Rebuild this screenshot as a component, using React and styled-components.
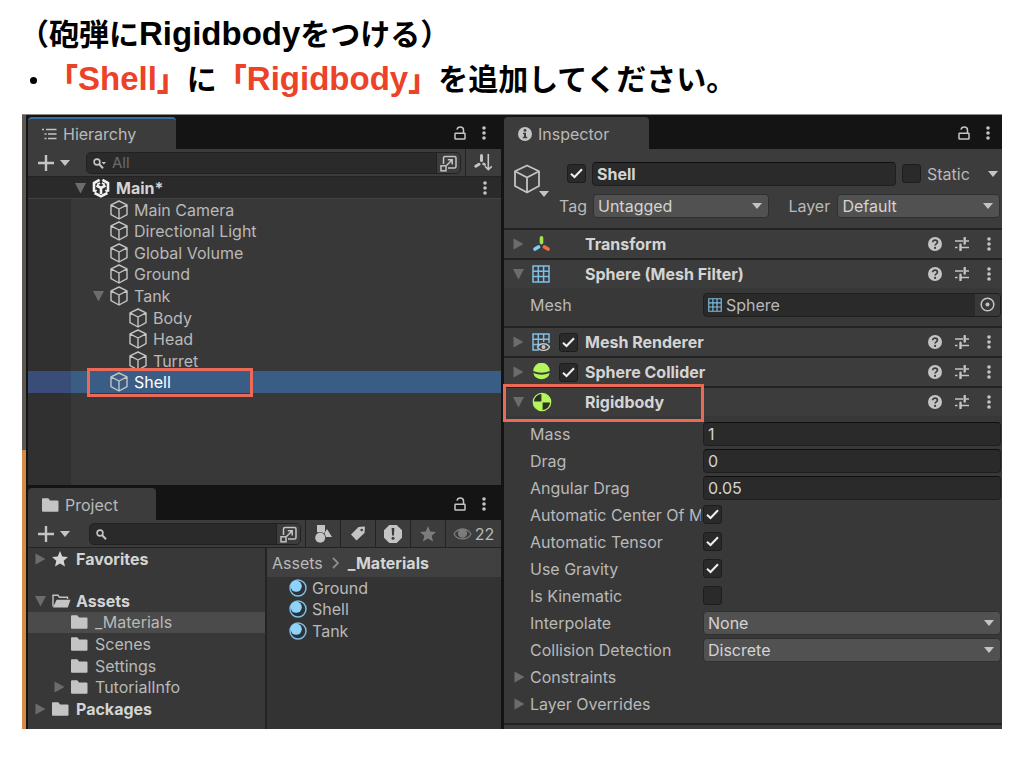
import React from "react";
import styled, { createGlobalStyle, css } from "styled-components";

const GlobalStyle = createGlobalStyle`
  *, *::before, *::after { box-sizing: border-box; }
  body { margin: 0; background: #fff; }
  button, input, select { font: inherit; color: inherit; margin: 0; }
  svg { display: block; flex: none; }
  ul { list-style: none; margin: 0; padding: 0; }
`;

const c = {
  black: "#141414",
  panel: "#3c3c3c",
  body: "#383838",
  gutter: "#303030",
  field: "#2a2a2a",
  line: "#232323",
  text: "#b9b9b9",
  bright: "#d4d4d4",
  icon: "#c4c4c4",
  arrow: "#6c6c6c",
  blue: "#8fd3fb",
  lime: "#b5f55c",
  mark: "#ea6a57",
};

/* ---------- slide ---------- */

const Slide = styled.main`
  padding: 13px 22px 38px;
`;

const Heading = styled.h1`
  margin: 0 0 0 -3px;
  font: 700 30px/44px "Liberation Sans", "Noto Sans CJK JP", sans-serif;
  color: #000;
  white-space: nowrap;
`;

const Bullets = styled.ul`
  font: 700 30px/46px "Liberation Sans", "Noto Sans CJK JP", sans-serif;
  color: #000;
  white-space: nowrap;
`;

const Bullet = styled.li`
  display: flex;
  align-items: center;
  &::before {
    content: "";
    width: 7px;
    height: 7px;
    margin: 0 11px 0 8px;
    border-radius: 50%;
    background: #000;
  }
`;

const Latin = styled.span`
  font-size: 33px;
  line-height: 1;
`;

const Red = styled.strong`
  color: #ec4228;
`;

/* ---------- editor frame ---------- */

const Editor = styled.div`
  display: grid;
  grid-template-columns: 6px minmax(0, 473fr) 3px minmax(0, 498fr);
  margin-top: 11px;
  border-top: 1px solid #8a8a8a;
  background: ${c.black};
  color: ${c.text};
  font: 400 16px/20px Inter, sans-serif;
`;

const Strip = styled.div`
  display: flex;
  flex-direction: column;
  margin-right: 2px;
`;

const StripPart = styled.div`
  flex: ${(p) => p.$grow};
  background: ${(p) => p.$color};
`;

const Column = styled.div`
  grid-column: ${(p) => p.$col};
  display: flex;
  flex-direction: column;
  min-width: 0;
`;

const Panel = styled.section`
  display: flex;
  flex-direction: column;
  flex: ${(p) => (p.$grow ? 1 : "none")};
`;

const TabBar = styled.header`
  display: flex;
  align-items: flex-end;
  justify-content: space-between;
  height: ${(p) => p.$h}px;
  background: ${c.black};
`;

const Tab = styled.button`
  display: flex;
  align-items: center;
  gap: 6px;
  height: 32px;
  width: ${(p) => p.$w}px;
  padding: 0 0 0 14px;
  border: 0;
  border-top: 2px solid ${(p) => (p.$active ? "#3b6c9f" : c.panel)};
  border-radius: 4px 4px 0 0;
  background: ${c.panel};
  text-align: left;
  svg { color: ${c.icon}; }
`;

const IconButton = styled.button`
  display: grid;
  place-items: center;
  flex: none;
  width: ${(p) => p.$w || 20}px;
  height: 22px;
  padding: 0;
  border: 0;
  background: none;
  color: ${c.icon};
`;

const TabTools = styled.div`
  display: flex;
  align-items: center;
  gap: 2px;
  height: 32px;
  padding-right: ${(p) => p.$pad}px;
`;

const Toolbar = styled.div`
  display: flex;
  height: 28px;
  background: ${c.panel};
  border-bottom: 1px solid ${c.line};
`;

const AddButton = styled.button`
  display: flex;
  align-items: center;
  gap: 6px;
  width: ${(p) => p.$w}px;
  padding: 0 0 0 10px;
  border: 0;
  background: none;
  color: ${c.icon};
`;

const Search = styled.label`
  display: flex;
  flex: 1;
  align-items: center;
  gap: 6px;
  min-width: 0;
  margin: 3px 4px 2px 0;
  padding-left: 6px;
  overflow: hidden;
  border: 1px solid #212121;
  border-radius: 5px;
  background: ${c.field};
  color: ${c.icon};
  input {
    flex: 1;
    min-width: 0;
    padding: 0;
    border: 0;
    outline: 0;
    background: none;
    font-size: 15px;
  }
  input::placeholder { color: #6b6b6b; opacity: 1; }
  button {
    height: 100%;
    background: ${c.panel};
    border-left: 1px solid #212121;
  }
`;

const ToolButton = styled.button`
  display: flex;
  align-items: center;
  justify-content: center;
  gap: 3px;
  flex: none;
  width: ${(p) => p.$w || 35}px;
  padding: 0;
  border: 0;
  border-left: 1px solid ${c.line};
  background: ${c.panel};
  color: ${(p) => (p.$dim ? "#7c7c7c" : c.icon)};
  span { color: ${c.text}; }
`;

/* ---------- trees ---------- */

const SceneRow = styled.div`
  display: flex;
  align-items: center;
  gap: 6px;
  height: 22px;
  padding: 0 6px 0 47px;
  background: #2a2a2a;
  border-bottom: 1px solid #414141;
  color: ${c.bright};
  font-weight: 700;
  span { flex: 1; }
`;

const HierarchyBody = styled.div`
  flex: 1;
  padding-bottom: 92px;
  background: linear-gradient(to right, ${c.gutter} 43px, ${c.body} 43px);
`;

const Rows = styled.ul`
  display: grid;
  grid-auto-rows: 1fr;
  height: ${(p) => p.$h}px;
`;

const Row = styled.li`
  position: relative;
  display: grid;
  grid-template-columns: 11px 18px 1fr;
  align-items: center;
  column-gap: 6px;
  padding-left: ${(p) => p.$indent}px;
  white-space: nowrap;
  ${(p) => p.$strong && css`
    color: ${c.bright};
    font-weight: 700;
  `}
  ${(p) => p.$hover && css`background: #4b4b4b;`}
  ${(p) => p.$selected && css`
    background: linear-gradient(to right, #3a4d78 43px, #3a5d85 43px);
    color: #fff;
  `}
`;

const Mark = styled.span`
  position: absolute;
  pointer-events: none;
  border: 3px solid ${c.mark};
  inset: ${(p) => p.$inset};
  width: ${(p) => p.$w}px;
`;

const ProjectBody = styled.div`
  flex: 1;
  display: grid;
  grid-template-columns: minmax(0, 237fr) minmax(0, 236fr);
  background: ${c.body};
`;

const Folders = styled.div`
  padding-bottom: 9px;
`;

const Favorites = styled(Rows)`
  margin-bottom: 20px;
`;

const Files = styled.div`
  border-left: 2px solid ${c.line};
  background: #333;
`;

const Crumbs = styled.nav`
  display: flex;
  align-items: center;
  gap: 9px;
  height: 29px;
  padding-left: 5px;
  background: #404040;
  a { color: inherit; text-decoration: none; }
  a:last-child { color: ${c.bright}; font-weight: 700; }
`;

const FileRow = styled.li`
  display: flex;
  align-items: center;
  gap: 5px;
  padding-left: 22px;
`;

/* ---------- inspector ---------- */

const Inspector = styled(Panel)`
  background: ${c.body};
`;

const ObjectHeader = styled.div`
  display: flex;
  gap: 10px;
  padding: 12px 2px 10px 9px;
  background: ${c.panel};
`;

const ObjectIcon = styled.button`
  display: flex;
  align-items: flex-end;
  flex: none;
  width: 36px;
  height: 36px;
  padding: 0;
  border: 0;
  background: none;
  color: ${c.icon};
  svg:first-child { margin-bottom: 3px; }
  svg:last-child { margin-left: -2px; }
`;

const ObjectFields = styled.div`
  flex: 1;
  display: flex;
  flex-direction: column;
  gap: 7px;
  min-width: 0;
`;

const Line = styled.div`
  display: flex;
  align-items: center;
  height: 25px;
`;

const NameLine = styled(Line)`
  padding-left: 8px;
  gap: 6px;
`;

const TextInput = styled.input`
  flex: 1;
  min-width: 0;
  width: 100%;
  height: 24px;
  padding: 0 4px;
  border: 1px solid #1f1f1f;
  border-top-color: #0f0f0f;
  border-radius: 4px;
  outline: 0;
  background: ${c.field};
  color: ${c.bright};
  font-weight: ${(p) => (p.$bold ? 700 : 400)};
`;

const StaticLabel = styled.label`
  width: 53px;
`;

const TagLabel = styled.label`
  flex: none;
  width: ${(p) => p.$w}px;
`;

const SelectBox = styled.span`
  display: grid;
  align-items: center;
  flex: ${(p) => p.$grow || 1};
  min-width: 0;
  height: 24px;
  border: 1px solid #303030;
  border-radius: 4px;
  background: #515151;
  color: ${c.icon};
  select {
    grid-area: 1 / 1;
    width: 100%;
    padding: 0 20px 0 4px;
    appearance: none;
    border: 0;
    outline: 0;
    background: none;
    color: ${c.bright};
  }
  svg {
    grid-area: 1 / 1;
    justify-self: end;
    margin-right: 6px;
    pointer-events: none;
  }
`;

const CheckBox = styled.span`
  display: grid;
  place-items: center;
  flex: none;
  width: 19px;
  height: 19px;
  color: #f0f0f0;
  input {
    grid-area: 1 / 1;
    width: 19px;
    height: 19px;
    appearance: none;
    border: 1px solid #1d1d1d;
    border-radius: 3px;
    background: ${c.field};
  }
  svg { grid-area: 1 / 1; pointer-events: none; visibility: hidden; }
  input:checked + svg { visibility: visible; }
`;

const ComponentBar = styled.div`
  position: relative;
  display: grid;
  grid-template-columns: 12px 20px 19px 1fr auto;
  align-items: center;
  column-gap: 7px;
  height: 30px;
  padding: 0 3px 0 9px;
  border-top: 2px solid ${c.line};
  background: ${c.panel};
  h2 {
    grid-column: 4;
    margin: 0;
    font: inherit;
    font-weight: 700;
    color: ${c.bright};
  }
`;

const BarTools = styled.div`
  grid-column: 5;
  display: flex;
  gap: 7px;
`;

const Fields = styled.div`
  padding: ${(p) => p.$pad};
`;

const Field = styled.div`
  display: grid;
  grid-template-columns: minmax(0, 171fr) minmax(0, 298fr);
  column-gap: 2px;
  align-items: center;
  height: 27px;
  padding: 0 1px 0 26px;
  label {
    overflow: hidden;
    white-space: nowrap;
  }
`;

const ObjectField = styled.span`
  display: flex;
  align-items: center;
  gap: 4px;
  height: 24px;
  padding-left: 4px;
  overflow: hidden;
  border: 1px solid #1f1f1f;
  border-radius: 4px;
  background: ${c.field};
  input {
    flex: 1;
    min-width: 0;
    padding: 0;
    border: 0;
    outline: 0;
    background: none;
  }
  button { width: 25px; background: ${c.body}; }
`;

const Foldout = styled.button`
  display: flex;
  align-items: center;
  gap: 5px;
  height: 27px;
  padding: 0 0 0 10px;
  border: 0;
  background: none;
`;

const PanelFoot = styled.div`
  flex: 1;
  min-height: 5px;
  border-top: 2px solid ${c.line};
  background: ${c.panel};
`;

/* ---------- icons ---------- */

const Right = () => (
  <svg width="11" height="12" viewBox="0 0 11 12" fill={c.arrow}><path d="M0.5 0.500 10.500 6 0.500 11.500z" /></svg>
);
const Down = () => (
  <svg width="11" height="12" viewBox="0 0 11 12" fill={c.arrow}><path d="M0 1h11L5.500 11.500z" /></svg>
);
const Caret = () => (
  <svg width="10" height="6" viewBox="0 0 10 6" fill="currentColor"><path d="M0 0h10L5 6z" /></svg>
);
const Kebab = () => (
  <svg width="4" height="14" viewBox="0 0 4 14" fill="currentColor">
    <circle cx="2" cy="2" r="1.800" /><circle cx="2" cy="7" r="1.800" /><circle cx="2" cy="12" r="1.800" />
  </svg>
);
const Lock = () => (
  <svg width="12" height="14" viewBox="0 0 12 14" fill="none" stroke="currentColor" strokeWidth="1.500">
    <rect x="1" y="7.200" width="10" height="5.800" rx="0.500" />
    <path d="M3 3.600C3.400 1.700 4.700 1 6.200 1 8.200 1 9.500 2.200 9.500 4v3" />
  </svg>
);
const Plus = () => (
  <svg width="16" height="16" viewBox="0 0 16 16" stroke="currentColor" strokeWidth="2.400"><path d="M8 0v16M0 8h16" /></svg>
);
const Magnifier = ({ menu }) => (
  <svg width="13" height="11" viewBox="0 0 13 11" fill="none" stroke="currentColor" strokeWidth="1.600">
    <circle cx="4" cy="4" r="2.900" /><path d="M6 6l4 4.200" strokeWidth="2" />
    {menu && <path d="M8.500 4h4.500L10.800 6.500z" fill="currentColor" stroke="none" />}
  </svg>
);
const Popout = () => (
  <svg width="17" height="17" viewBox="0 0 17 17" fill="none" stroke="currentColor" strokeWidth="1.500">
    <path d="M3.500 9V3a1.500 1.500 0 0 1 1.500-1.500h9.500A1.500 1.500 0 0 1 16 3v8.500a1.500 1.500 0 0 1-1.500 1.500H8" />
    <rect x="1" y="10.800" width="5" height="5" /><path d="M6.500 10.500 12 5M7.800 4.800h4.400v4.600" />
  </svg>
);
const SortIcon = () => (
  <svg width="19" height="17" viewBox="0 0 19 17" fill="none" stroke="currentColor">
    <path d="M7.500 1.500v5" strokeWidth="3" strokeLinecap="round" />
    <path d="M5 10.300 1.800 12.200" strokeWidth="3" strokeLinecap="round" />
    <path d="M9.500 9.800l1.200.700" strokeWidth="2.600" strokeLinecap="round" />
    <path d="M14.300 0v15.500M11 12.300l3.300 3.300 3.500-3.300" strokeWidth="1.600" />
  </svg>
);
const Cube = ({ large }) => (
  <svg width={large ? 28 : 18} height={large ? 30 : 20} viewBox="0 0 18 20" fill="none" stroke="#c4c4c4" strokeWidth={large ? 1.200 : 1.400} strokeLinejoin="round">
    <path d="M9 1 17 4.800V14.700L9 19 1 14.700V4.800zM1 4.800 9 9l8-4.200M9 9v10" />
  </svg>
);
const UnityMark = () => (
  <svg width="18" height="20" viewBox="0 0 18 20" fill="none" stroke="#f2f2f2" strokeWidth="2.600">
    <path d="M7.600 1.900 2 5v8.700M16 13.700V5L10.400 1.900M2.600 15 9 18.400l6.400-3.400" />
    <path d="M4.500 7.500 9 10l4.500-2.500M9 10v6" />
    <path d="M5.200 6.600 8 5M12.800 6.600 10 5M2 13.800 4.800 12.200M16 13.800 13.200 12.200" strokeWidth="1.800" />
  </svg>
);
const ListIcon = () => (
  <svg width="15" height="12" viewBox="0 0 15 12" fill="none" stroke="currentColor" strokeWidth="1.700">
    <path d="M0 1.500h2M4 1.500H14.500M2.500 6h2M6 6H14.500M2.500 10.500h2M6 10.500H14.500" />
  </svg>
);
const Folder = () => (
  <svg width="17" height="14" viewBox="0 0 17 14" fill="#c4c4c4">
    <path d="M0 1.200A1 1 0 0 1 1 .2h5.300l1.700 2.300h7.500a1 1 0 0 1 1 1v9.300a1 1 0 0 1-1 1H1a1 1 0 0 1-1-1z" />
  </svg>
);
const FolderOpen = () => (
  <svg width="19" height="14" viewBox="0 0 19 14" fill="#c4c4c4">
    <path d="M1 12.500V1.300h5l1.500 2h8V5" fill="none" stroke="#c4c4c4" strokeWidth="1.400" />
    <path d="M4.600 5.800H18.500L15.800 13.600H1z" />
  </svg>
);
const Star = ({ size = 16 }) => (
  <svg width={size} height={size} viewBox="0 0 16 16" fill="currentColor">
    <path d="M8 0l2.300 5.400 5.700.500-4.300 3.900 1.300 5.700L8 12.500l-5 3 1.300-5.700L0 5.900l5.700-.5z" />
  </svg>
);
const Shapes = () => (
  <svg width="17" height="18" viewBox="0 0 17 18" fill="currentColor">
    <path d="M2 0h8v6.500L8.500 8.500 7 7.300H2zM12 4l5 8h-6L9.500 8z" /><circle cx="5.200" cy="12.800" r="5" />
  </svg>
);
const TagIcon = () => (
  <svg width="14" height="15" viewBox="0 0 14 15">
    <path d="M7.500 1 13 0.500a.8.8 0 0 1 .9.900L13.500 7 5.500 14.600 0 8.400z" fill="currentColor" />
    <circle cx="10.700" cy="4" r="1.300" fill={c.panel} />
  </svg>
);
const Alert = () => (
  <svg width="18" height="18" viewBox="0 0 18 18">
    <path d="M5.300 0h7.400L18 5.300v7.400L12.700 18H5.300L0 12.700V5.300z" fill="currentColor" />
    <path d="M7.600 3h2.800l-.5 7.500H8.100z" fill={c.panel} /><circle cx="9" cy="13.300" r="1.500" fill={c.panel} />
  </svg>
);
const Eye = () => (
  <svg width="19" height="12" viewBox="0 0 19 12" fill="none" stroke="currentColor" strokeWidth="1.200">
    <path d="M1 6C4.500 -.6 14.500 -.6 18 6 14.500 12.600 4.500 12.600 1 6z" /><circle cx="9.500" cy="5.200" r="4" fill="currentColor" />
  </svg>
);
const Material = () => (
  <svg width="18" height="18" viewBox="0 0 18 18">
    <circle cx="9" cy="9" r="8" fill="#2b3238" stroke="#7fc0e6" strokeWidth="1.500" />
    <circle cx="7.200" cy="7.200" r="5.600" fill={c.blue} />
  </svg>
);
const Info = () => (
  <svg width="14" height="14" viewBox="0 0 14 14">
    <circle cx="7" cy="7" r="7" fill="currentColor" />
    <circle cx="7" cy="3.400" r="1.400" fill={c.panel} />
    <path d="M5 5.800h3v4h1.200v1.400H4.800V9.800H6V7.200H5z" fill={c.panel} />
  </svg>
);
const Help = () => (
  <svg width="14" height="14" viewBox="0 0 14 14">
    <circle cx="7" cy="7" r="7" fill="currentColor" />
    <path d="M4.700 5.200C4.700 2.500 9.400 2.500 9.400 5.200 9.400 6.900 7.100 6.800 7.100 8.600" fill="none" stroke={c.panel} strokeWidth="1.700" />
    <circle cx="7.100" cy="10.900" r="1.100" fill={c.panel} />
  </svg>
);
const Sliders = () => (
  <svg width="14" height="14" viewBox="0 0 14 14" fill="none" stroke="currentColor">
    <path d="M0 4h8M11 4h3M0 10.500h2.500M6 10.500h8" strokeWidth="1.400" />
    <path d="M9.700 1v5.500M5.500 7.700v5.500" strokeWidth="2.400" strokeLinecap="round" />
  </svg>
);
const Target = () => (
  <svg width="15" height="15" viewBox="0 0 15 15"><circle cx="7.500" cy="7.500" r="6.300" fill="none" stroke="currentColor" strokeWidth="1.500" /><circle cx="7.500" cy="7.500" r="2" fill="currentColor" /></svg>
);
const Tick = () => (
  <svg width="13" height="11" viewBox="0 0 13 11" fill="none" stroke="currentColor" strokeWidth="2"><path d="M1 5.800 4.500 9 12 1.200" /></svg>
);
const Chevron = () => (
  <svg width="7" height="12" viewBox="0 0 7 12" fill="none" stroke="#8c8c8c" strokeWidth="1.800"><path d="M1 1l5 5-5 5" /></svg>
);
const Axes = () => (
  <svg width="18" height="18" viewBox="0 0 18 18" fill="none" strokeWidth="3.600" strokeLinecap="round">
    <path d="M9.500 2.800v4.800" stroke="#a4e34a" /><path d="M6.500 12 3 14" stroke="#86cdf5" /><path d="M12.500 12 16 14" stroke="#ee7040" />
  </svg>
);
const Grid = ({ size = 18, dots }) => (
  <svg width={size} height={size} viewBox="0 0 18 18" fill="none" stroke="#7fbfe6" strokeWidth="1.500">
    {dots ? (
      <>
        <path d="M7 17H1V1h16v9M1 6.300h16M1 11.600h8M6.300 1v15M11.600 1v8" />
        <path d="M5.500 14C8 9.500 15 9.500 17.500 14 15 18.500 8 18.500 5.500 14z" fill={c.panel} stroke="#c4c4c4" />
        <circle cx="11.500" cy="14" r="2" fill="#c4c4c4" stroke="none" />
      </>
    ) : (
      <path d="M1 1h16v16H1zM1 6.300h16M1 11.600h16M6.300 1v16M11.600 1v16" />
    )}
  </svg>
);
const SphereIcon = () => (
  <svg width="18" height="18" viewBox="0 0 18 18" fill={c.lime}>
    <path d="M1.200 8a8.300 8.300 0 0 1 16.600 0Q9.500 11.500 1.200 8z" /><path d="M1.300 10a8.300 7.500 0 0 0 16.400 0Q9.500 13.400 1.300 10z" />
  </svg>
);
const RigidIcon = () => (
  <svg width="20" height="20" viewBox="0 0 20 20">
    <circle cx="10" cy="10" r="8.700" fill="#2b2f25" stroke={c.lime} strokeWidth="1.300" />
    <path d="M10 10V18.700A8.700 8.700 0 0 0 18.700 10zM10 10V1.300A8.700 8.700 0 0 0 1.300 10z" fill={c.lime} transform="matrix(1 0 0 -1 0 20)" />
    <path d="M10 1v18M1 10h18" stroke={c.lime} strokeWidth="1.200" />
  </svg>
);

/* ---------- parts ---------- */

const PanelTabs = ({ icon, name, width, active, pad = 7, height = 34 }) => (
  <TabBar $h={height}>
    <Tab type="button" $w={width} $active={active}>{icon}<span>{name}</span></Tab>
    <TabTools $pad={pad}>
      <IconButton type="button" $w={24} aria-label={`Lock ${name}`}><Lock /></IconButton>
      <IconButton type="button" aria-label={`${name} menu`}><Kebab /></IconButton>
    </TabTools>
  </TabBar>
);

const Check = ({ id, on, label }) => (
  <CheckBox>
    <input type="checkbox" id={id} aria-label={label} defaultChecked={on} />
    <Tick />
  </CheckBox>
);

const Select = ({ id, value, grow }) => (
  <SelectBox $grow={grow}>
    <select id={id} defaultValue={value}><option>{value}</option></select>
    <Caret />
  </SelectBox>
);

const Component = ({ name, icon, open, check, children }) => (
  <ComponentBar>
    {open ? <Down /> : <Right />}
    {icon}
    {check && <Check on label={`${name} enabled`} />}
    <h2>{name}</h2>
    <BarTools>
      <IconButton type="button" aria-label="Help"><Help /></IconButton>
      <IconButton type="button" aria-label="Presets"><Sliders /></IconButton>
      <IconButton type="button" aria-label="More"><Kebab /></IconButton>
    </BarTools>
    {children}
  </ComponentBar>
);

const hierarchy = [
  ["Main Camera", 65],
  ["Directional Light", 65],
  ["Global Volume", 65],
  ["Ground", 65],
  ["Tank", 65, true],
  ["Body", 84],
  ["Head", 84],
  ["Turret", 84],
  ["Shell", 65],
];

const folders = [
  { name: "Assets", indent: 7, arrow: <Down />, icon: <FolderOpen />, strong: true },
  { name: "_Materials", indent: 26, hover: true },
  { name: "Scenes", indent: 26 },
  { name: "Settings", indent: 26 },
  { name: "TutorialInfo", indent: 26, arrow: <Right /> },
  { name: "Packages", indent: 7, arrow: <Right />, strong: true },
];

const numbers = [["Mass", "1"], ["Drag", "0"], ["Angular Drag", "0.05"]];
const toggles = [["Automatic Center Of Mass", true], ["Automatic Tensor", true], ["Use Gravity", true], ["Is Kinematic", false]];
const choices = [["Interpolate", "None"], ["Collision Detection", "Discrete"]];

const idOf = (name) => name.toLowerCase().replace(/\s+/g, "-");

export default function App() {
  return (
    <Slide>
      <GlobalStyle />
      <Heading>（砲弾に<Latin>Rigidbody</Latin>をつける）</Heading>
      <Bullets>
        <Bullet>
          <span>
            <Red>「<Latin>Shell</Latin>」</Red>に<Red>「<Latin>Rigidbody</Latin>」</Red>を追加してください。
          </span>
        </Bullet>
      </Bullets>

      <Editor>
        <Strip>
          <StripPart $grow={335} $color="#5b5850" />
          <StripPart $grow={279} $color="#d58a45" />
        </Strip>

        <Column $col={2}>
          <Panel>
            <PanelTabs icon={<ListIcon />} name="Hierarchy" width={148} active />
            <Toolbar>
              <AddButton type="button" $w={58} aria-label="Create object"><Plus /><Caret /></AddButton>
              <Search>
                <Magnifier menu />
                <input type="text" placeholder="All" aria-label="Search hierarchy" />
                <IconButton type="button" $w={24} aria-label="Open search"><Popout /></IconButton>
              </Search>
              <ToolButton type="button" $w={36} aria-label="Sort"><SortIcon /></ToolButton>
            </Toolbar>
            <SceneRow>
              <Down /><UnityMark /><span>Main*</span>
              <IconButton type="button" aria-label="Scene menu"><Kebab /></IconButton>
            </SceneRow>
            <HierarchyBody>
              <Rows $h={194}>
                {hierarchy.map(([name, indent, open]) => (
                  <Row key={name} $indent={indent} $selected={name === "Shell"}>
                    {open ? <Down /> : <span />}
                    <Cube />
                    <span>{name}</span>
                    {name === "Shell" && <Mark $inset="-3px auto -4px 59px" $w={166} />}
                  </Row>
                ))}
              </Rows>
            </HierarchyBody>
          </Panel>

          <Panel $grow>
            <PanelTabs icon={<Folder />} name="Project" width={128} height={35} />
            <Toolbar>
              <AddButton type="button" $w={61} aria-label="Create asset"><Plus /><Caret /></AddButton>
              <Search>
                <Magnifier />
                <input type="text" aria-label="Search project" />
                <IconButton type="button" $w={24} aria-label="Open search"><Popout /></IconButton>
              </Search>
              <ToolButton type="button" aria-label="Filter by type"><Shapes /></ToolButton>
              <ToolButton type="button" aria-label="Filter by label"><TagIcon /></ToolButton>
              <ToolButton type="button" aria-label="Filter by log"><Alert /></ToolButton>
              <ToolButton type="button" $dim aria-label="Favorite"><Star /></ToolButton>
              <ToolButton type="button" $dim $w={56}><Eye /><span>22</span></ToolButton>
            </Toolbar>
            <ProjectBody>
              <Folders>
                <Favorites $h={22}>
                  <Row $indent={7} $strong><Right /><Star /><span>Favorites</span></Row>
                </Favorites>
                <Rows $h={130}>
                  {folders.map((f) => (
                    <Row key={f.name} $indent={f.indent} $strong={f.strong} $hover={f.hover}>
                      {f.arrow || <span />}
                      {f.icon || <Folder />}
                      <span>{f.name}</span>
                    </Row>
                  ))}
                </Rows>
              </Folders>
              <Files>
                <Crumbs aria-label="Path"><a href="#assets">Assets</a><Chevron /><a href="#materials">_Materials</a></Crumbs>
                <Rows $h={65}>
                  {["Ground", "Shell", "Tank"].map((name) => (
                    <FileRow key={name}><Material /><span>{name}</span></FileRow>
                  ))}
                </Rows>
              </Files>
            </ProjectBody>
          </Panel>
        </Column>

        <Column $col={4}>
          <Inspector $grow>
            <PanelTabs icon={<Info />} name="Inspector" width={145} pad={4} />
            <ObjectHeader>
              <ObjectIcon type="button" aria-label="Object icon"><Cube large /><Caret /></ObjectIcon>
              <ObjectFields>
                <NameLine>
                  <Check on label="Object active" />
                  <TextInput type="text" $bold defaultValue="Shell" aria-label="Object name" />
                  <Check id="static" />
                  <StaticLabel htmlFor="static">Static</StaticLabel>
                  <IconButton type="button" $w={14} aria-label="Static options"><Caret /></IconButton>
                </NameLine>
                <Line>
                  <TagLabel htmlFor="tag" $w={34}>Tag</TagLabel>
                  <Select id="tag" value="Untagged" grow={177} />
                  <TagLabel as="span" $w={19} />
                  <TagLabel htmlFor="layer" $w={49}>Layer</TagLabel>
                  <Select id="layer" value="Default" grow={163} />
                </Line>
              </ObjectFields>
            </ObjectHeader>

            <Component name="Transform" icon={<Axes />} />
            <Component name="Sphere (Mesh Filter)" icon={<Grid />} open />
            <Fields $pad="3px 0 8px">
              <Field>
                <label htmlFor="mesh">Mesh</label>
                <ObjectField>
                  <Grid size={14} />
                  <input type="text" id="mesh" defaultValue="Sphere" />
                  <IconButton type="button" aria-label="Pick mesh"><Target /></IconButton>
                </ObjectField>
              </Field>
            </Fields>
            <Component name="Mesh Renderer" icon={<Grid dots />} check />
            <Component name="Sphere Collider" icon={<SphereIcon />} check />
            <Component name="Rigidbody" icon={<RigidIcon />} open>
              <Mark $inset="-4px auto -6px -1px" $w={201} />
            </Component>
            <Fields $pad="4px 0 6px">
              {numbers.map(([name, value]) => (
                <Field key={name}>
                  <label htmlFor={idOf(name)}>{name}</label>
                  <TextInput type="text" id={idOf(name)} defaultValue={value} />
                </Field>
              ))}
              {toggles.map(([name, on]) => (
                <Field key={name}>
                  <label htmlFor={idOf(name)}>{name}</label>
                  <Check id={idOf(name)} on={on} />
                </Field>
              ))}
              {choices.map(([name, value]) => (
                <Field key={name}>
                  <label htmlFor={idOf(name)}>{name}</label>
                  <Select id={idOf(name)} value={value} />
                </Field>
              ))}
              <Foldout type="button"><Right />Constraints</Foldout>
              <Foldout type="button"><Right />Layer Overrides</Foldout>
            </Fields>
            <PanelFoot />
          </Inspector>
        </Column>
      </Editor>
    </Slide>
  );
}
